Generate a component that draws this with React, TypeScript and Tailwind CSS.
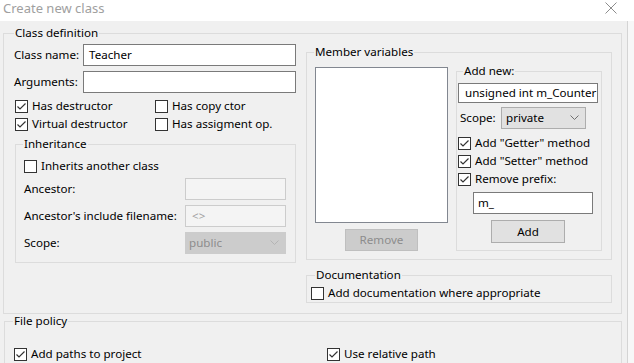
import React from 'react';

function Check({ checked }: { checked?: boolean }) {
  return (
    <span className="w-[13px] h-[13px] border border-[#333333] bg-white flex items-center justify-center shrink-0">
      {checked && (
        <svg width="11" height="11" viewBox="0 0 11 11">
          <path d="M1.5 5.5 L4 8 L9.5 2.5" fill="none" stroke="#333333" strokeWidth="1.2" />
        </svg>
      )}
    </span>
  );
}

function CheckRow({ label, checked, className = '' }: { label: string; checked?: boolean; className?: string }) {
  return (
    <label className={`h-[18px] flex items-center gap-[4px] whitespace-nowrap ${className}`}>
      <Check checked={checked} />
      <span>{label}</span>
    </label>
  );
}

function Chevron({ color }: { color: string }) {
  return (
    <svg width="9" height="6" viewBox="0 0 9 6">
      <path d="M0.5 0.5 L4.5 4.5 L8.5 0.5" fill="none" stroke={color} strokeWidth="1" />
    </svg>
  );
}

export default function App() {
  return (
    <div className="w-[634px] h-[363px] overflow-hidden bg-white flex flex-col font-['Noto_Sans','Segoe_UI',sans-serif] text-[11.6px] leading-[14px] text-black">
      {/* Title bar */}
      <div className="h-[21px] shrink-0 flex items-start justify-between pl-[3px] pr-[17px] pt-[0px]">
        <span className="text-[13px] leading-[16px] text-[#a0a0a0]">Create new class</span>
        <svg width="12" height="12" viewBox="0 0 12 12" className="mt-[2px]">
          <path d="M0.5 0.5 L11.5 11.5 M11.5 0.5 L0.5 11.5" stroke="#8c8c8c" strokeWidth="1" />
        </svg>
      </div>

      <div className="flex-1 flex">
        <div className="w-[628px] bg-[#f0f0f0] border-r border-[#d4d4d4] pl-[3px] pt-[5px]">
          {/* Class definition */}
          <fieldset className="w-[619px] h-[288px] border border-[#dcdcdc] pl-[10px] pt-[4px]">
            <legend className="px-[1px] leading-[14px]">Class definition</legend>
            <div className="flex gap-[10px]">
              {/* Left column */}
              <div className="w-[282px] flex flex-col">
                <div className="h-[22px] flex items-center">
                  <span className="w-[69px]">Class name:</span>
                  <div className="w-[213px] h-[22px] border border-[#7a7a7a] bg-white px-[5px] flex items-center">Teacher</div>
                </div>
                <div className="h-[22px] mt-[5px] flex items-center">
                  <span className="w-[69px]">Arguments:</span>
                  <div className="w-[213px] h-[22px] border border-[#7a7a7a] bg-white" />
                </div>
                <div className="mt-[4px] ml-[1px] flex">
                  <div className="w-[140px] flex flex-col">
                    <CheckRow label="Has destructor" checked />
                    <CheckRow label="Virtual destructor" checked />
                  </div>
                  <div className="flex flex-col">
                    <CheckRow label="Has copy ctor" />
                    <CheckRow label="Has assigment op." />
                  </div>
                </div>

                {/* Inheritance */}
                <fieldset className="mt-[4px] ml-[1px] w-[281px] h-[126px] border border-[#dcdcdc] pl-[8px] pt-[6px]">
                  <legend className="px-[1px] -ml-[1px] leading-[14px]">Inheritance</legend>
                  <CheckRow label="Inherits another class" />
                  <div className="mt-[3px] h-[22px] flex items-center">
                    <span className="w-[161px]">Ancestor:</span>
                    <div className="w-[101px] h-[22px] border border-[#cccccc] bg-[#f4f4f4]" />
                  </div>
                  <div className="mt-[5px] h-[22px] flex items-center">
                    <span className="w-[161px] whitespace-nowrap">Ancestor's include filename:</span>
                    <div className="w-[101px] h-[22px] border border-[#cccccc] bg-[#f4f4f4] px-[6px] flex items-center text-[#a0a0a0]">&lt;&gt;</div>
                  </div>
                  <div className="mt-[5px] h-[22px] flex items-center">
                    <span className="w-[161px]">Scope:</span>
                    <div className="w-[101px] h-[22px] border border-[#cccccc] bg-[#cccccc] pl-[3px] pr-[6px] flex items-center justify-between text-[#8c8c8c]">
                      <span>public</span>
                      <Chevron color="#b4b4b4" />
                    </div>
                  </div>
                </fieldset>
              </div>

              {/* Right column */}
              <div className="w-[306px] flex flex-col">
                <fieldset className="mt-[1px] w-[306px] h-[215px] border border-[#dcdcdc] pl-[8px]">
                  <legend className="px-[1px] -ml-[1px] leading-[14px]">Member variables</legend>
                  <div className="flex">
                    <div className="flex flex-col mt-[8px]">
                      <div className="w-[133px] h-[156px] border border-[#828790] bg-white" />
                      <div className="mt-[6px] ml-[30px] w-[73px] h-[22px] border border-[#bfbfbf] bg-[#cccccc] flex items-center justify-center text-[#8c8c8c]">Remove</div>
                    </div>

                    {/* Add new */}
                    <fieldset className="mt-[5px] ml-[8px] w-[146px] h-[187px] border border-[#dcdcdc] pl-[1px]">
                      <legend className="ml-[5px] px-[1px] leading-[14px]">Add new:</legend>
                      <div className="mt-[5px] w-[140px] h-[20px] border border-[#7a7a7a] bg-white pl-[6px] flex items-center overflow-hidden whitespace-nowrap">unsigned int m_Counter</div>
                      <div className="mt-[4px] h-[22px] flex items-center pl-[2px]">
                        <span className="w-[41px]">Scope:</span>
                        <div className="w-[85px] h-[22px] border border-[#adadad] bg-[#e1e1e1] pl-[4px] pr-[6px] flex items-center justify-between">
                          <span>private</span>
                          <Chevron color="#707070" />
                        </div>
                      </div>
                      <div className="mt-[5px] flex flex-col">
                        <CheckRow label='Add "Getter" method' checked />
                        <CheckRow label='Add "Setter" method' checked />
                        <CheckRow label="Remove prefix:" checked />
                      </div>
                      <div className="mt-[4px] ml-[15px] w-[120px] h-[22px] border border-[#7a7a7a] bg-white pl-[4px] flex items-center">m_</div>
                      <div className="mt-[6px] ml-[33px] w-[74px] h-[23px] border border-[#adadad] bg-[#e1e1e1] flex items-center justify-center">Add</div>
                    </fieldset>
                  </div>
                </fieldset>

                {/* Documentation */}
                <fieldset className="mt-[8px] w-[306px] h-[35px] border border-[#dcdcdc] pl-[4px] pt-[2px]">
                  <legend className="ml-[4px] px-[1px] leading-[14px]">Documentation</legend>
                  <CheckRow label="Add documentation where appropriate" />
                </fieldset>
              </div>
            </div>
          </fieldset>

          {/* File policy */}
          <fieldset className="ml-[1px] w-[618px] h-[60px] border border-[#dcdcdc] pl-[9px] pt-[17px]">
            <legend className="px-[1px] -ml-[1px] leading-[14px]">File policy</legend>
            <div className="flex">
              <CheckRow label="Add paths to project" checked className="w-[313px]" />
              <CheckRow label="Use relative path" checked />
            </div>
          </fieldset>
        </div>
        <div className="flex-1 bg-[#f7f7f7]" />
      </div>
    </div>
  );
}
